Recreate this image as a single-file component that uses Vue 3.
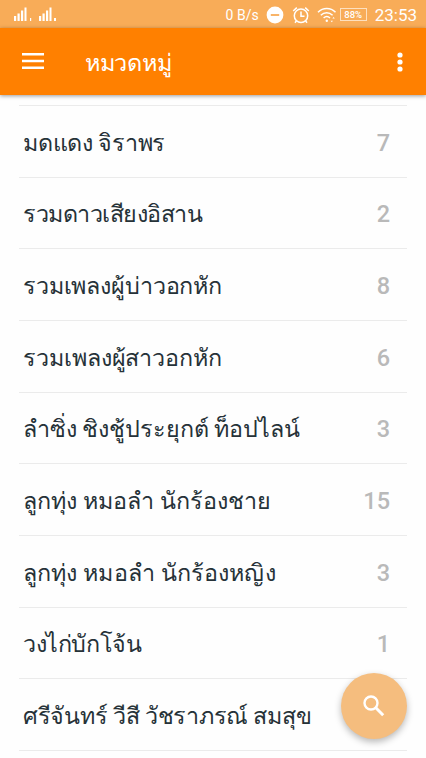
<script setup>
const categories = [
  { name: 'มดแดง จิราพร', count: 7, tracking: -0.25 },
  { name: 'รวมดาวเสียงอิสาน', count: 2, tracking: -0.5 },
  { name: 'รวมเพลงผู้บ่าวอกหัก', count: 8, tracking: -0.13 },
  { name: 'รวมเพลงผู้สาวอกหัก', count: 6, tracking: -0.07 },
  { name: 'ลำซิ่ง ชิงชู้ประยุกต์ ท็อปไลน์', count: 3, tracking: -0.08 },
  { name: 'ลูกทุ่ง หมอลำ นักร้องชาย', count: 15, tracking: 0.04 },
  { name: 'ลูกทุ่ง หมอลำ นักร้องหญิง', count: 3, tracking: 0.12 },
  { name: 'วงไก่บักโจ้น', count: 1, tracking: -0.4 },
  { name: 'ศรีจันทร์ วีสี วัชราภรณ์ สมสุข', count: null, tracking: -0.27 },
]
</script>

<template>
  <div class="screen">
    <header class="status">
      <svg class="signals" width="48" height="20" viewBox="0 0 48 20" fill="#fff">
        <path d="M1 15h2.200v5H1zM4.500 12.500h2.200v7.500h-2.200zM8 9.500h2.200V20H8zM11.500 6.500h2v13.500h-2zM17 17h1.200v3.500H17zM26 15h2.200v5H26zM29.500 12.500h2.200v7.500h-2.200zM33 9.500h2.200V20H33zM36.500 6.500h2v13.500h-2zM41 17h2v3.500h-2z" />
      </svg>
      <div class="indicators">
        <span class="speed">0 B/s</span>
        <svg class="dnd" width="18" height="18" viewBox="0 0 18 18">
          <circle cx="9" cy="9" r="8.400" fill="#fff" />
          <path d="M4.800 9h8.400" stroke="#f8ac58" stroke-width="1.800" />
        </svg>
        <svg class="alarm" width="18" height="18" viewBox="0 0 18 18" fill="none" stroke="#fff" stroke-width="1.500">
          <circle cx="9" cy="9.800" r="6.700" />
          <path d="M9 5.500v4.800h3.500M1.200 5l3.600-3.400M16.800 5l-3.600-3.400M4.500 14.800l-1.500 2M13.500 14.800l1.500 2" />
        </svg>
        <svg class="wifi" width="20" height="16" viewBox="0 0 20 16" fill="none" stroke="#fff" stroke-width="1.500">
          <path d="M1 5.200C6 .3 13.500.3 18.500 5.200M3.800 8.200c3.500-3.400 8.300-3.400 11.800 0M6.600 11c2-1.800 4.400-1.800 6.400 0" />
          <circle cx="9.800" cy="13.800" r="1.200" fill="#fff" stroke="none" />
          <path d="M13.600 13.800l1.200 1.400 1.200-1.400zM15.400 11.400l1.200-1.400 1.200 1.400z" fill="#fff" stroke="none" />
        </svg>
        <span class="battery">88%</span>
        <span class="clock">23:53</span>
      </div>
    </header>

    <nav class="appbar">
      <svg class="menu" width="22" height="18" viewBox="0 0 22 18" fill="#fff">
        <path d="M0 1h22v2.500H0zM0 7.700h22v2.500H0zM0 14.400h22v2.500H0z" />
      </svg>
      <h1 class="title">หมวดหมู่</h1>
      <svg class="more" width="6" height="20" viewBox="0 0 6 20" fill="#fff">
        <circle cx="3" cy="3" r="2.600" /><circle cx="3" cy="10" r="2.600" /><circle cx="3" cy="17" r="2.600" />
      </svg>
    </nav>

    <ul class="list">
      <li v-for="item in categories" :key="item.name" class="row">
        <span class="name" :style="{ letterSpacing: item.tracking + 'px' }">{{ item.name }}</span>
        <span class="count">{{ item.count }}</span>
      </li>
    </ul>

    <button class="fab" type="button">
      <svg width="22" height="22" viewBox="0 0 22 22" fill="none" stroke="#fff" stroke-width="2.400">
        <circle cx="8" cy="8" r="6.500" />
        <path d="M12.800 12.800l7.400 7.400" stroke-width="3" />
      </svg>
    </button>
  </div>
</template>

<style>
body { background: #fefefe; }
</style>

<style scoped>
.screen {
  position: relative;
  width: 426px;
  height: 758px;
  overflow: hidden;
  background: #fefefe;
  font-family: Roboto, sans-serif;
}
.status {
  display: flex;
  justify-content: space-between;
  height: 28px;
  box-sizing: border-box;
  padding: 0 9px 0 13px;
  background: #f8ac58;
  color: #fff;
}
.signals { margin-top: 1px; }
.indicators { display: flex; align-items: center; height: 29px; }
.speed { font-size: 14px; }
.dnd { margin-left: 7px; }
.alarm { margin-left: 8px; }
.wifi { margin-left: 7px; }
.battery {
  box-sizing: border-box;
  width: 27px;
  height: 13px;
  margin-left: 3px;
  border: 1px solid #fde0bf;
  font-size: 9.500px;
  font-weight: 500;
  line-height: 11px;
  text-align: center;
}
.clock { margin-left: 8px; font-size: 17px; }
.appbar {
  position: relative;
  display: flex;
  align-items: center;
  height: 67px;
  box-sizing: border-box;
  padding: 0 23px 0 22px;
  background: #ff8000;
  box-shadow: 0 1px 4px rgba(0, 0, 0, 0.4);
}
.menu { margin-bottom: 1px; }
.title {
  margin: 3px 0 0 41px;
  color: #fff;
  font-size: 23.500px;
  font-weight: 400;
  letter-spacing: -0.3px;
  line-height: 40px;
}
.more { margin-left: auto; }
.list {
  margin: 10px 19px 0;
  padding: 0;
  list-style: none;
  border-top: 1px solid #ebebeb;
}
.row {
  display: flex;
  align-items: center;
  justify-content: space-between;
  height: 71.670px;
  box-sizing: border-box;
  padding: 3px 17px 0 4px;
  border-bottom: 1px solid #ebebeb;
}
.name { color: #263238; font-size: 23.300px; line-height: 40px; white-space: nowrap; }
.count { color: #b9b9b9; font-size: 23.500px; font-weight: 500; }
.fab {
  position: absolute;
  right: 19px;
  bottom: 19px;
  display: flex;
  align-items: center;
  justify-content: center;
  width: 66px;
  height: 66px;
  padding: 0;
  border: 0;
  border-radius: 50%;
  background: #f5bd7e;
  box-shadow: 0 3px 7px rgba(0, 0, 0, 0.28);
}
</style>
